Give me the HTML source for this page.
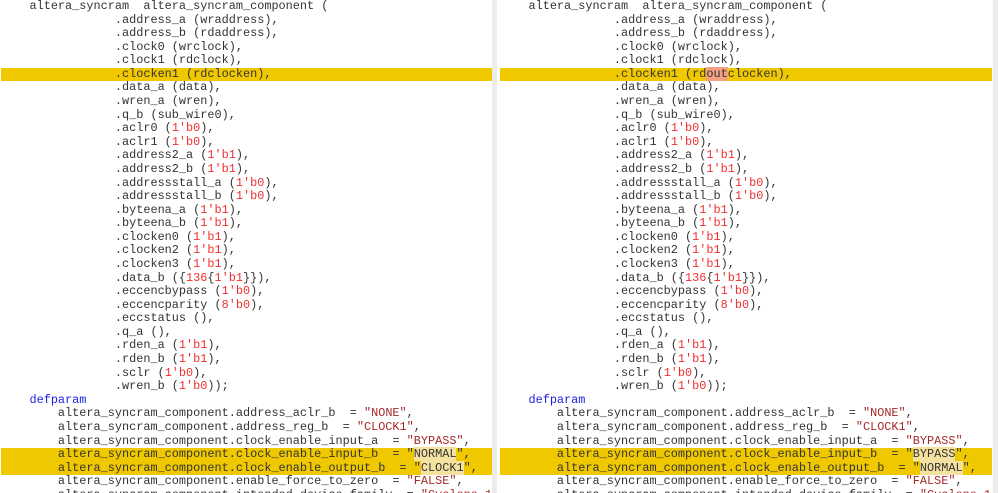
<!DOCTYPE html>
<html><head><meta charset="utf-8"><style>
html,body{margin:0;padding:0;background:#fff;width:998px;height:493px;overflow:hidden}
.pane{position:absolute;top:0;height:493px;overflow:hidden}
#l{left:0;width:492px}
#r{left:499px;width:493px}
.div{position:absolute;top:0;left:492px;width:5px;height:493px;background:#ececec}
.sb{position:absolute;top:0;left:993px;width:5px;height:493px;background:#ececec}
pre{margin:0;font-family:"Liberation Mono","Courier New",monospace;font-size:11.86px;line-height:13.58px;color:#333;white-space:pre}
#l pre{padding-left:1px}
#r pre{padding-left:1px}
.ln{display:block;height:13.58px}
.hl{background:#f0c800}
.n{color:#f03030}
.s{color:#a52a2a}
.k{color:#2020e0}
.w{background:#f5e2a0}
.o{background:#f5a080}
</style></head><body>
<div class="pane" id="l"><pre><span class="ln">    altera_syncram  altera_syncram_component (</span><span class="ln">                .address_a (wraddress),</span><span class="ln">                .address_b (rdaddress),</span><span class="ln">                .clock0 (wrclock),</span><span class="ln">                .clock1 (rdclock),</span><span class="ln hl">                .clocken1 (rdclocken),</span><span class="ln">                .data_a (data),</span><span class="ln">                .wren_a (wren),</span><span class="ln">                .q_b (sub_wire0),</span><span class="ln">                .aclr0 (<span class="n">1'b0</span>),</span><span class="ln">                .aclr1 (<span class="n">1'b0</span>),</span><span class="ln">                .address2_a (<span class="n">1'b1</span>),</span><span class="ln">                .address2_b (<span class="n">1'b1</span>),</span><span class="ln">                .addressstall_a (<span class="n">1'b0</span>),</span><span class="ln">                .addressstall_b (<span class="n">1'b0</span>),</span><span class="ln">                .byteena_a (<span class="n">1'b1</span>),</span><span class="ln">                .byteena_b (<span class="n">1'b1</span>),</span><span class="ln">                .clocken0 (<span class="n">1'b1</span>),</span><span class="ln">                .clocken2 (<span class="n">1'b1</span>),</span><span class="ln">                .clocken3 (<span class="n">1'b1</span>),</span><span class="ln">                .data_b ({<span class="n">136</span>{<span class="n">1'b1</span>}}),</span><span class="ln">                .eccencbypass (<span class="n">1'b0</span>),</span><span class="ln">                .eccencparity (<span class="n">8'b0</span>),</span><span class="ln">                .eccstatus (),</span><span class="ln">                .q_a (),</span><span class="ln">                .rden_a (<span class="n">1'b1</span>),</span><span class="ln">                .rden_b (<span class="n">1'b1</span>),</span><span class="ln">                .sclr (<span class="n">1'b0</span>),</span><span class="ln">                .wren_b (<span class="n">1'b0</span>));</span><span class="ln">    <span class="k">defparam</span></span><span class="ln">        altera_syncram_component.address_aclr_b  = <span class="s">"NONE"</span>,</span><span class="ln">        altera_syncram_component.address_reg_b  = <span class="s">"CLOCK1"</span>,</span><span class="ln">        altera_syncram_component.clock_enable_input_a  = <span class="s">"BYPASS"</span>,</span><span class="ln hl">        altera_syncram_component.clock_enable_input_b  = "<span class="w">NORMAL</span>",</span><span class="ln hl">        altera_syncram_component.clock_enable_output_b  = "<span class="w">CLOCK1</span>",</span><span class="ln">        altera_syncram_component.enable_force_to_zero  = <span class="s">"FALSE"</span>,</span><span class="ln">        altera_syncram_component.intended_device_family  = <span class="s">"Cyclone 10 GX"</span>,</span></pre></div>
<div class="div"></div>
<div class="pane" id="r"><pre><span class="ln">    altera_syncram  altera_syncram_component (</span><span class="ln">                .address_a (wraddress),</span><span class="ln">                .address_b (rdaddress),</span><span class="ln">                .clock0 (wrclock),</span><span class="ln">                .clock1 (rdclock),</span><span class="ln hl">                .clocken1 (rd<span class="o">out</span>clocken),</span><span class="ln">                .data_a (data),</span><span class="ln">                .wren_a (wren),</span><span class="ln">                .q_b (sub_wire0),</span><span class="ln">                .aclr0 (<span class="n">1'b0</span>),</span><span class="ln">                .aclr1 (<span class="n">1'b0</span>),</span><span class="ln">                .address2_a (<span class="n">1'b1</span>),</span><span class="ln">                .address2_b (<span class="n">1'b1</span>),</span><span class="ln">                .addressstall_a (<span class="n">1'b0</span>),</span><span class="ln">                .addressstall_b (<span class="n">1'b0</span>),</span><span class="ln">                .byteena_a (<span class="n">1'b1</span>),</span><span class="ln">                .byteena_b (<span class="n">1'b1</span>),</span><span class="ln">                .clocken0 (<span class="n">1'b1</span>),</span><span class="ln">                .clocken2 (<span class="n">1'b1</span>),</span><span class="ln">                .clocken3 (<span class="n">1'b1</span>),</span><span class="ln">                .data_b ({<span class="n">136</span>{<span class="n">1'b1</span>}}),</span><span class="ln">                .eccencbypass (<span class="n">1'b0</span>),</span><span class="ln">                .eccencparity (<span class="n">8'b0</span>),</span><span class="ln">                .eccstatus (),</span><span class="ln">                .q_a (),</span><span class="ln">                .rden_a (<span class="n">1'b1</span>),</span><span class="ln">                .rden_b (<span class="n">1'b1</span>),</span><span class="ln">                .sclr (<span class="n">1'b0</span>),</span><span class="ln">                .wren_b (<span class="n">1'b0</span>));</span><span class="ln">    <span class="k">defparam</span></span><span class="ln">        altera_syncram_component.address_aclr_b  = <span class="s">"NONE"</span>,</span><span class="ln">        altera_syncram_component.address_reg_b  = <span class="s">"CLOCK1"</span>,</span><span class="ln">        altera_syncram_component.clock_enable_input_a  = <span class="s">"BYPASS"</span>,</span><span class="ln hl">        altera_syncram_component.clock_enable_input_b  = "<span class="w">BYPASS</span>",</span><span class="ln hl">        altera_syncram_component.clock_enable_output_b  = "<span class="w">NORMAL</span>",</span><span class="ln">        altera_syncram_component.enable_force_to_zero  = <span class="s">"FALSE"</span>,</span><span class="ln">        altera_syncram_component.intended_device_family  = <span class="s">"Cyclone 10 GX"</span>,</span></pre></div>
<div class="sb"></div>
</body></html>
